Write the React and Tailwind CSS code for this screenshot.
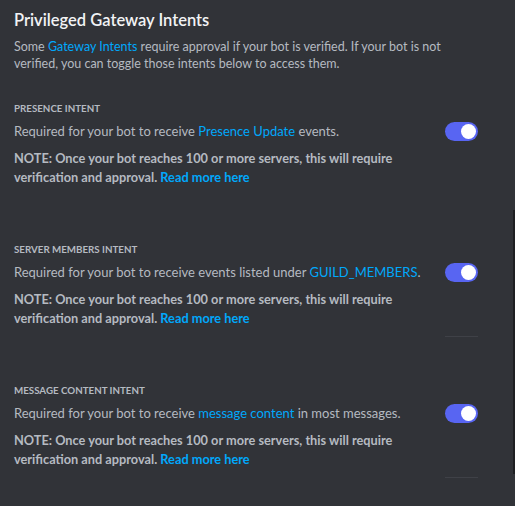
const sans = { fontFamily: 'Lato, "Noto Sans", sans-serif' }

const intents = [
  {
    label: 'Presence Intent',
    before: 'Required for your bot to receive ',
    link: 'Presence Update',
    after: ' events.',
    divider: false,
  },
  {
    label: 'Server Members Intent',
    before: 'Required for your bot to receive events listed under ',
    link: 'GUILD_MEMBERS',
    after: '.',
    divider: true,
  },
  {
    label: 'Message Content Intent',
    before: 'Required for your bot to receive ',
    link: 'message content',
    after: ' in most messages.',
    divider: true,
  },
]

function Toggle() {
  return (
    <div className="flex h-[19px] w-[33px] shrink-0 items-center justify-end rounded-full bg-[#5865f2] pr-[2px]">
      <div className="h-[15px] w-[15px] rounded-full bg-white" />
    </div>
  )
}

function IntentSection({ intent }) {
  return (
    <section className="flex h-[141px] flex-col">
      <div className="text-[9.75px] font-bold uppercase leading-[14px] text-[#b5bac1]">
        {intent.label}
      </div>
      <div className="mt-[7px] flex items-start pr-[37px]">
        <div className="flex-1">
          <p className="text-[13px] leading-[18px] text-[#b5bac1]">
            {intent.before}
            <span className="text-[#00a8fc]">{intent.link}</span>
            {intent.after}
          </p>
        </div>
        <Toggle />
      </div>
      <p className="mt-[8px] w-[395px] text-[12.75px] font-bold leading-[19px] text-[#b5bac1]">
        NOTE: Once your bot reaches 100 or more servers, this will require verification and
        approval. <span className="text-[#00a8fc]">Read more here</span>
      </p>
      {/* small separator under the toggle column */}
      <div className="mt-auto flex justify-end pr-[37px]">
        <div className={`mb-[46px] h-px w-[33px] ${intent.divider ? 'bg-[#3f4147]' : 'bg-transparent'}`} />
      </div>
    </section>
  )
}

export default function App() {
  return (
    <div className="relative h-[506px] w-[515px] overflow-hidden bg-[#313338] pl-[14px] pt-[10px]" style={sans}>
      <h2 className="text-[16.5px] font-semibold leading-[20px] text-[#f2f3f5]">
        Privileged Gateway Intents
      </h2>
      <p className="mt-[8px] w-[430px] text-[12.5px] leading-[17px] text-[#b5bac1]">
        Some <span className="text-[#00a8fc]">Gateway Intents</span> require approval if your bot is
        verified. If your bot is not verified, you can toggle those intents below to access them.
      </p>
      <div className="mt-[29px]">
        {intents.map((intent) => (
          <IntentSection key={intent.label} intent={intent} />
        ))}
      </div>
      {/* scrollbar thumb */}
      <div className="absolute right-0 top-[210px] h-[264px] w-[2px] bg-[#1e1f22]" />
    </div>
  )
}
